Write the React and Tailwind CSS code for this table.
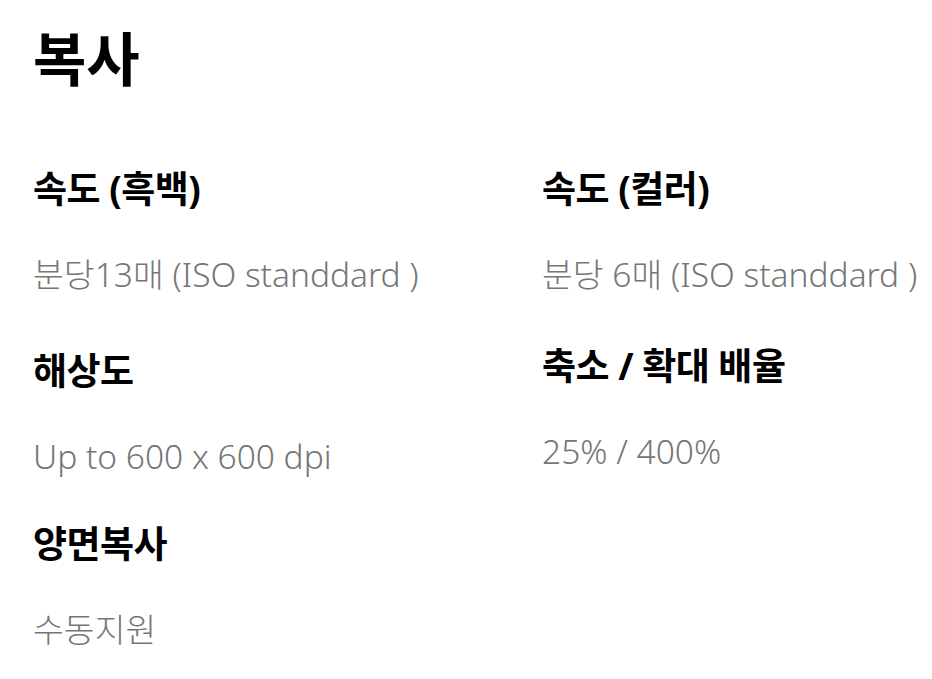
const LEFT = [
  { label: '속도 (흑백)', value: '분당13매 (ISO standdard )', gap: 'mt-0' },
  { label: '해상도', value: 'Up to 600 x 600 dpi', gap: 'mt-[51px]' },
  { label: '양면복사', value: '수동지원', gap: 'mt-[42px]' },
];

const RIGHT = [
  { label: '속도 (컬러)', value: '분당 6매 (ISO standdard )', gap: 'mt-0' },
  { label: '축소 / 확대 배율', value: '25% / 400%', gap: 'mt-[46px]' },
];

function Spec({ label, value, gap }) {
  return (
    <div className={gap}>
      <h3 className="text-[37px] leading-[48px] font-bold text-black tracking-[-0.5px] whitespace-nowrap">
        {label}
      </h3>
      <p className="mt-[39px] text-[33.5px] leading-[44px] font-light text-[#767676] whitespace-nowrap">
        {value}
      </p>
    </div>
  );
}

export default function App() {
  return (
    <div
      className="min-h-screen bg-white px-[33px] pt-[23px]"
      style={{ fontFamily: '"Noto Sans", "Noto Sans CJK KR", sans-serif' }}
    >
      <h1 className="text-[58px] leading-[72px] font-bold text-black">복사</h1>
      <div className="mt-[70px] grid grid-cols-[509px_1fr]">
        <div className="flex flex-col">
          {LEFT.map((s) => (
            <Spec key={s.label} {...s} />
          ))}
        </div>
        <div className="flex flex-col">
          {RIGHT.map((s) => (
            <Spec key={s.label} {...s} />
          ))}
        </div>
      </div>
    </div>
  );
}
